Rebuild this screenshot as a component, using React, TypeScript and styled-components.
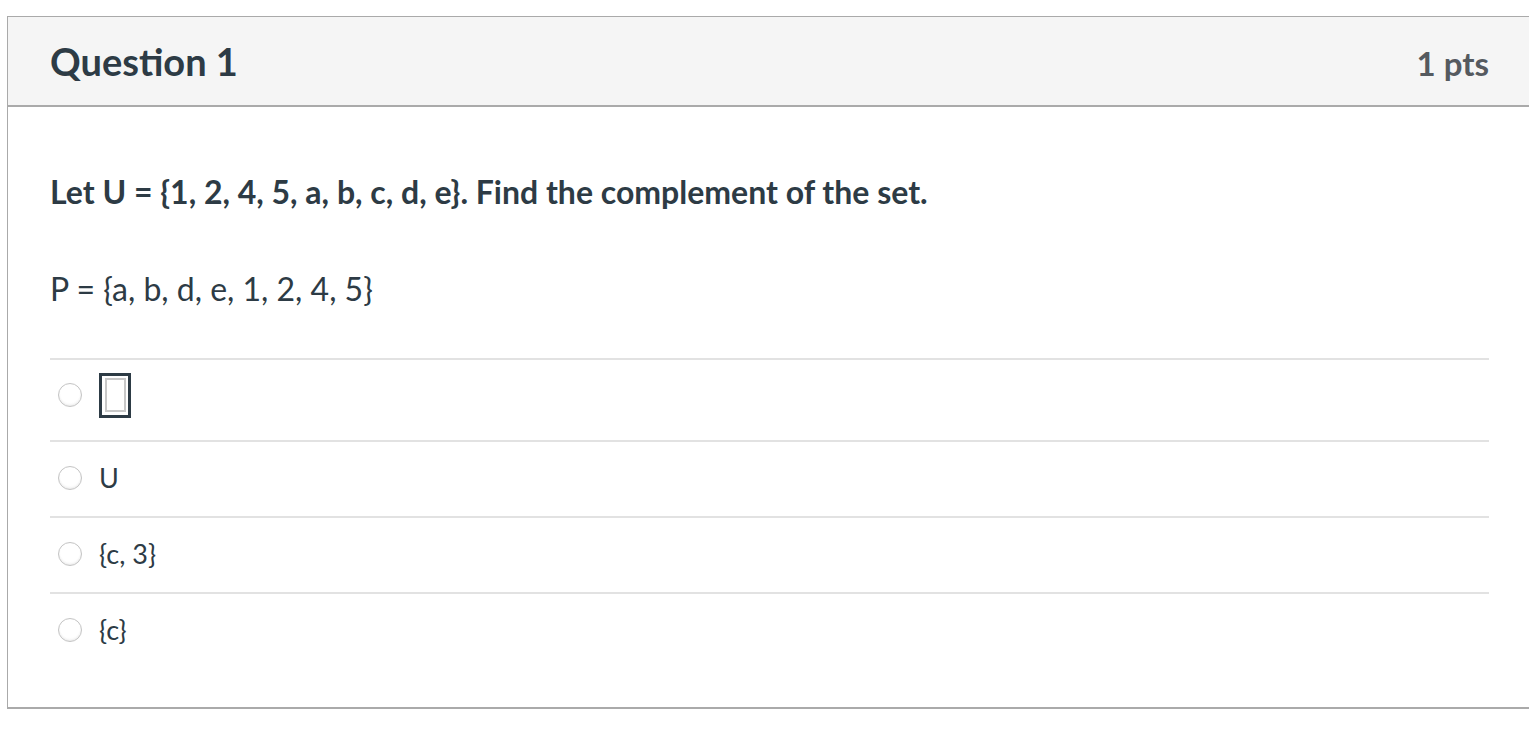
import React from "react";
import styled, { createGlobalStyle } from "styled-components";

const Global = createGlobalStyle`
  html, body { margin: 0; padding: 0; background: #fff; overflow: hidden; }
  body { font-family: Lato, "Noto Sans", sans-serif; color: #2d3b45; }
`;

const Page = styled.div`
  padding: 16px 0 0 7px;
  width: 1540px;
`;

const Card = styled.section`
  width: 1530px;
  border: 1px solid #aaaaaa;
  border-bottom-width: 2px;
  border-right: none;
  box-sizing: border-box;
  background: #fff;
`;

const Header = styled.header`
  height: 90px;
  box-sizing: border-box;
  background: #f5f5f5;
  border-bottom: 2px solid #aaaaaa;
  display: flex;
  align-items: center;
  justify-content: space-between;
  padding: 0 48px 0 42px;
`;

const Title = styled.h2`
  margin: 0;
  font-family: Lato, sans-serif;
  font-weight: 700;
  font-size: 38px;
  line-height: 44px;
  color: #2d3b45;
  padding-bottom: 1px;
`;

const Points = styled.div`
  font-family: Lato, sans-serif;
  font-weight: 700;
  font-size: 33px;
  line-height: 40px;
  color: #555a5f;
  padding-top: 3px;
`;

const Body = styled.div`
  padding: 65px 48px 39px 42px;
`;

const QuestionText = styled.p`
  margin: 0;
  font-size: 32px;
  line-height: 40px;
  font-weight: 700;
  color: #2d3b45;
`;

const SetText = styled.p`
  margin: 57px 0 0 0;
  font-size: 32px;
  line-height: 40px;
  font-weight: 400;
  color: #2d3b45;
`;

const Answers = styled.div`
  margin-top: 49px;
  border-top: 2px solid #e2e2e2;
`;

const Answer = styled.label<{ $tall?: boolean }>`
  display: flex;
  align-items: center;
  gap: 17px;
  box-sizing: border-box;
  height: ${(p) => (p.$tall ? 82 : 76)}px;
  border-bottom: 2px solid #e2e2e2;
  padding: 0 0 ${(p) => (p.$tall ? 10 : 3)}px 8px;
  font-size: 27px;
  color: #2d3b45;
  &:last-child {
    border-bottom: none;
    height: 74px;
  }
`;

const Radio = styled.span`
  width: 24px;
  height: 24px;
  box-sizing: border-box;
  border-radius: 50%;
  border: 1px solid #c4c4c4;
  background: radial-gradient(circle at 50% 40%, #ffffff 55%, #f0f0f0 100%);
  box-shadow: inset 0 -1px 2px rgba(0,0,0,0.06);
  flex: none;
`;

const MissingBox = styled.span`
  width: 32px;
  height: 45px;
  box-sizing: border-box;
  border: 3px solid #2d3b45;
  display: flex;
  align-items: center;
  justify-content: center;
`;

const MissingInner = styled.span`
  width: 21px;
  height: 34px;
  box-sizing: border-box;
  border: 2px solid #c8c8c8;
`;

const AnswerText = styled.span`
  line-height: 30px;
`;

export default function App() {
  return (
    <>
      <Global />
      <Page>
        <Card>
          <Header>
            <Title>Question 1</Title>
            <Points>1 pts</Points>
          </Header>
          <Body>
            <QuestionText>
              Let U = {"{"}1, 2, 4, 5, a, b, c, d, e{"}"}. Find the complement of the set.
            </QuestionText>
            <SetText>P = {"{"}a, b, d, e, 1, 2, 4, 5{"}"}</SetText>
            <Answers>
              <Answer $tall>
                <Radio />
                <MissingBox>
                  <MissingInner />
                </MissingBox>
              </Answer>
              <Answer>
                <Radio />
                <AnswerText>U</AnswerText>
              </Answer>
              <Answer>
                <Radio />
                <AnswerText>{"{c, 3}"}</AnswerText>
              </Answer>
              <Answer>
                <Radio />
                <AnswerText>{"{c}"}</AnswerText>
              </Answer>
            </Answers>
          </Body>
        </Card>
      </Page>
    </>
  );
}
